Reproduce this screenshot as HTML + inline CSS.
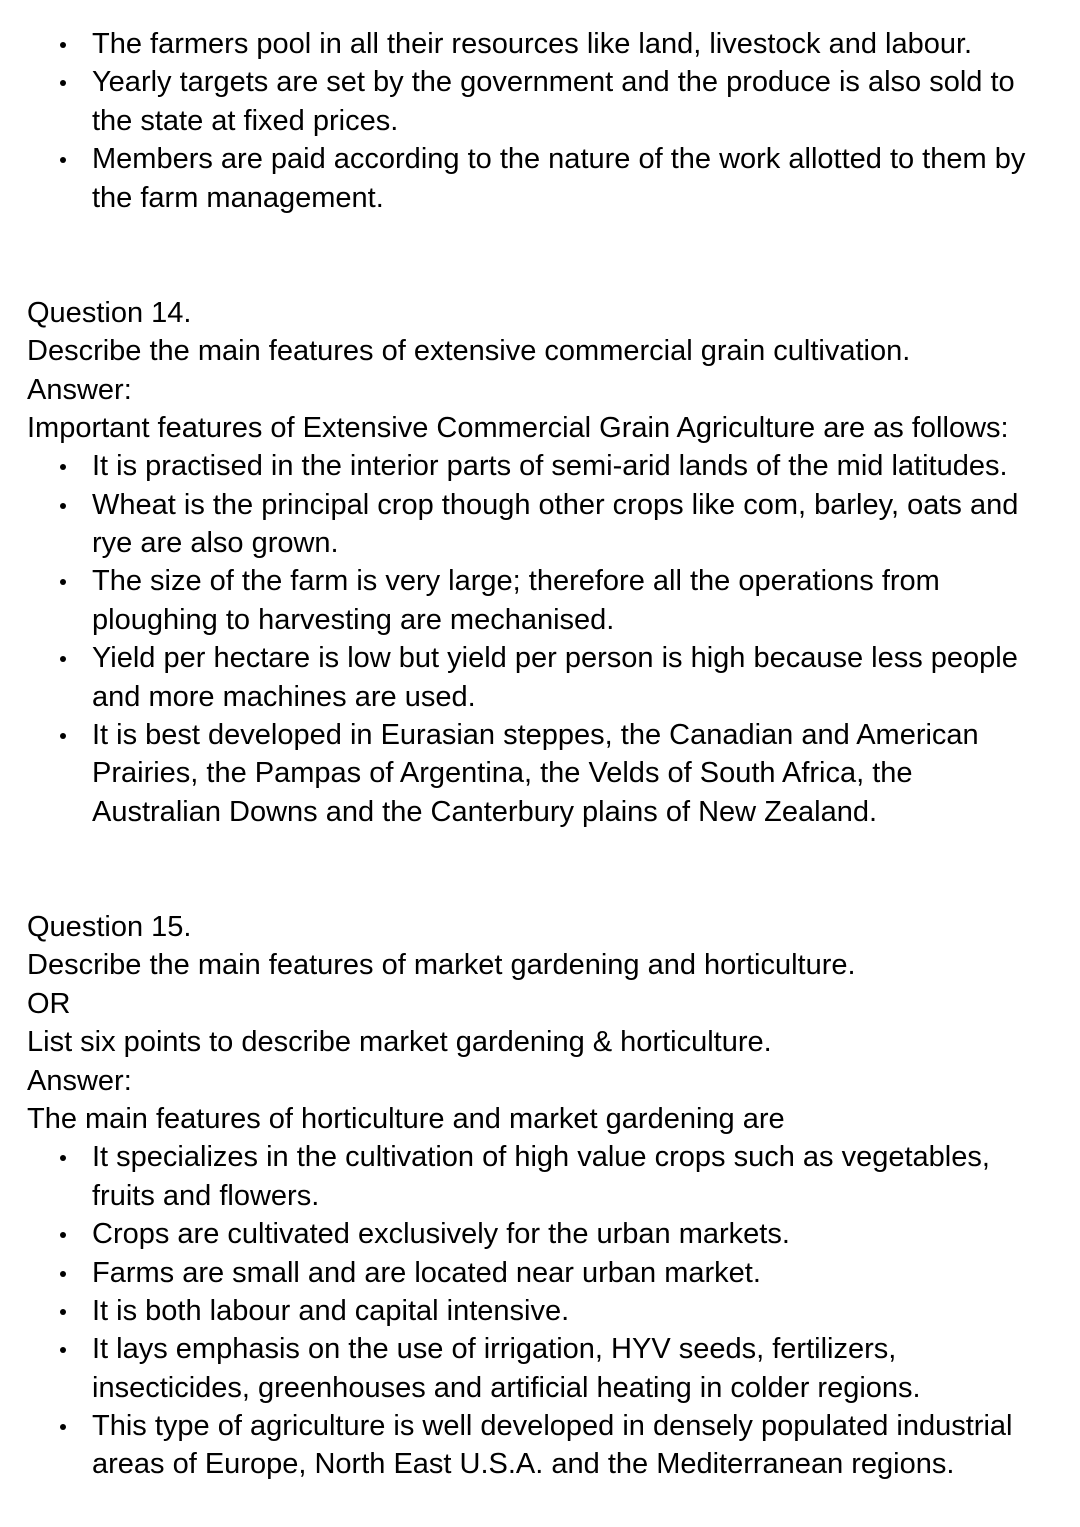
<!DOCTYPE html>
<html><head><meta charset="utf-8"><style>
body{margin:0;background:#fff;width:1080px;height:1527px;overflow:hidden;font-family:"Liberation Sans",Arial,sans-serif;font-size:29px;color:#000;}
.w{position:absolute;top:25px;left:27px;right:0;line-height:38.4px;}
.l{white-space:nowrap;height:38.4px}
.b{position:relative;padding-left:65px;}
.b::before{content:"";position:absolute;left:33px;top:17px;width:6px;height:6px;border-radius:50%;background:#000;}
.c{padding-left:65px}
.sp{height:76.8px}
</style></head><body><div class="w">
<div class="l b">The farmers pool in all their resources like land, livestock and labour.</div>
<div class="l b">Yearly targets are set by the government and the produce is also sold to</div>
<div class="l c">the state at fixed prices.</div>
<div class="l b">Members are paid according to the nature of the work allotted to them by</div>
<div class="l c">the farm management.</div>
<div class="sp"></div>
<div class="l">Question 14.</div>
<div class="l">Describe the main features of extensive commercial grain cultivation.</div>
<div class="l">Answer:</div>
<div class="l">Important features of Extensive Commercial Grain Agriculture are as follows:</div>
<div class="l b">It is practised in the interior parts of semi-arid lands of the mid latitudes.</div>
<div class="l b">Wheat is the principal crop though other crops like com, barley, oats and</div>
<div class="l c">rye are also grown.</div>
<div class="l b">The size of the farm is very large; therefore all the operations from</div>
<div class="l c">ploughing to harvesting are mechanised.</div>
<div class="l b">Yield per hectare is low but yield per person is high because less people</div>
<div class="l c">and more machines are used.</div>
<div class="l b">It is best developed in Eurasian steppes, the Canadian and American</div>
<div class="l c">Prairies, the Pampas of Argentina, the Velds of South Africa, the</div>
<div class="l c">Australian Downs and the Canterbury plains of New Zealand.</div>
<div class="sp"></div>
<div class="l">Question 15.</div>
<div class="l">Describe the main features of market gardening and horticulture.</div>
<div class="l">OR</div>
<div class="l">List six points to describe market gardening &amp; horticulture.</div>
<div class="l">Answer:</div>
<div class="l">The main features of horticulture and market gardening are</div>
<div class="l b">It specializes in the cultivation of high value crops such as vegetables,</div>
<div class="l c">fruits and flowers.</div>
<div class="l b">Crops are cultivated exclusively for the urban markets.</div>
<div class="l b">Farms are small and are located near urban market.</div>
<div class="l b">It is both labour and capital intensive.</div>
<div class="l b">It lays emphasis on the use of irrigation, HYV seeds, fertilizers,</div>
<div class="l c">insecticides, greenhouses and artificial heating in colder regions.</div>
<div class="l b">This type of agriculture is well developed in densely populated industrial</div>
<div class="l c">areas of Europe, North East U.S.A. and the Mediterranean regions.</div>
</div></body></html>
